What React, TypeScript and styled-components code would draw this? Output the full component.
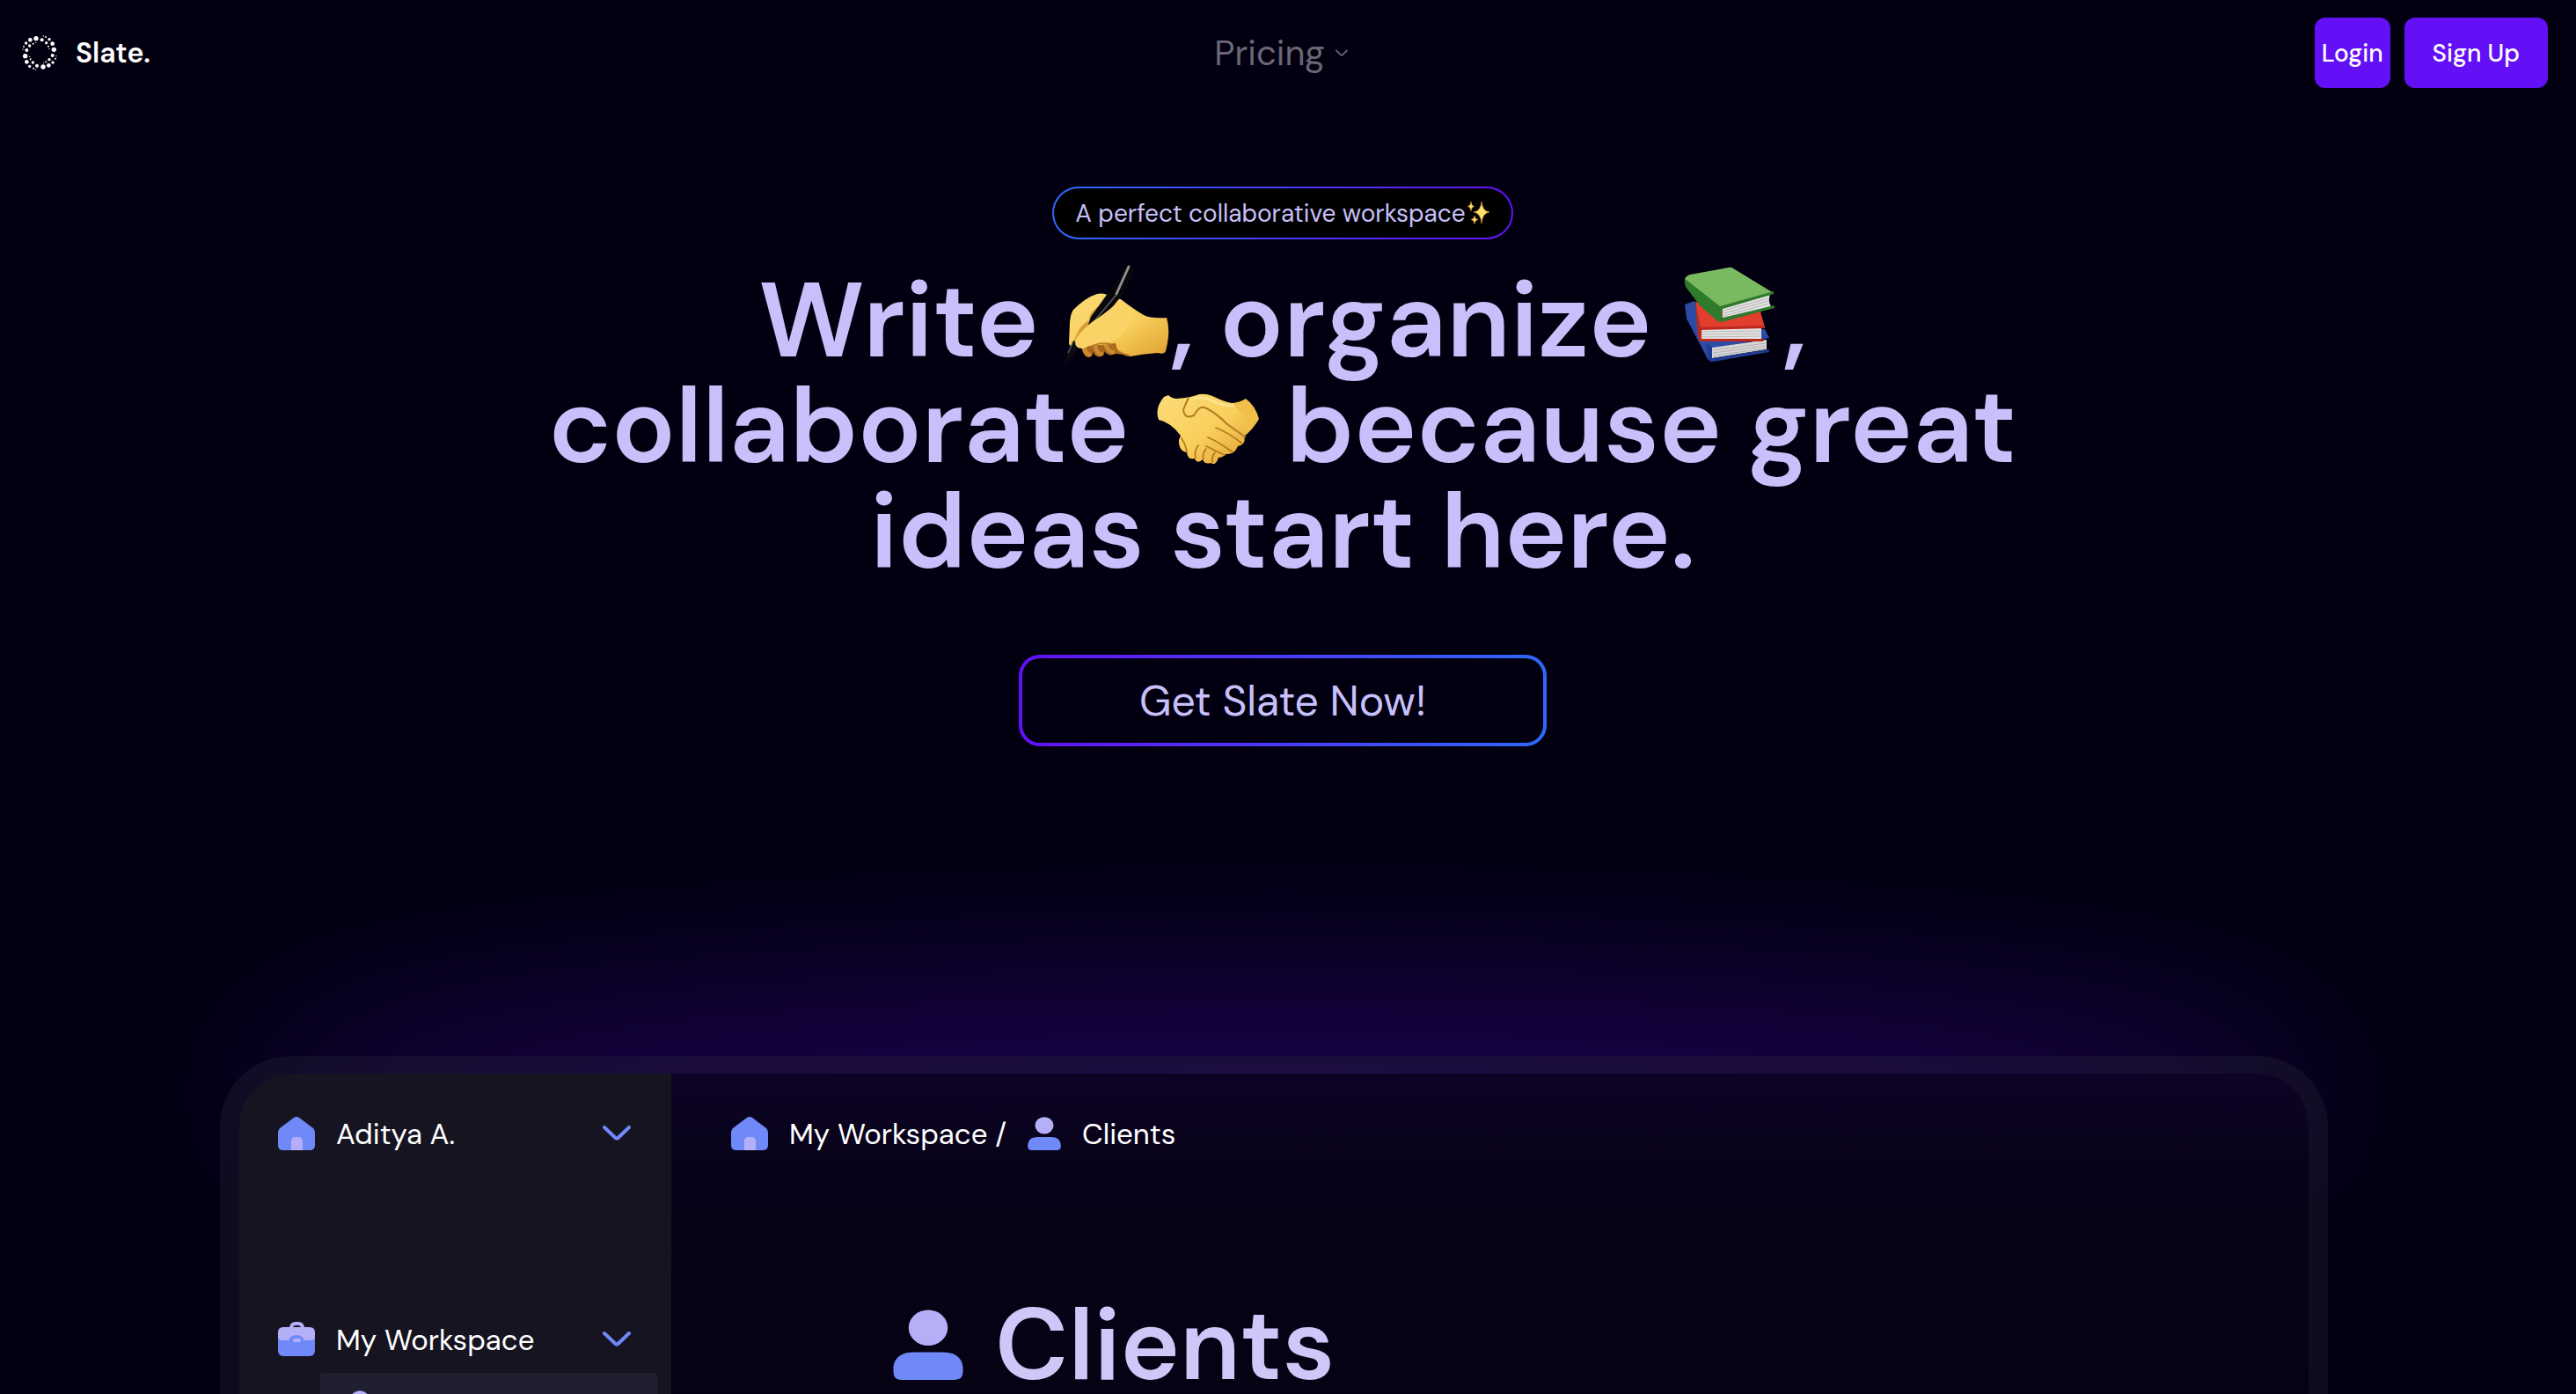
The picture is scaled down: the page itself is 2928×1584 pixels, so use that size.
import React from "react";
import styled, { createGlobalStyle } from "styled-components";

const GlobalStyle = createGlobalStyle`
  *, *::before, *::after { box-sizing: border-box; }
  body {
    margin: 0;
    background: #020010;
    color: #fff;
    font-family: "DM Sans", Inter, "Liberation Sans", sans-serif;
  }
  button, a { font-family: inherit; }
`;

const lilac = "#c8c0fa";
const violet = "#6410f6";
const azure = "#2e68fa";

const Page = styled.div`
  height: 100vh;
  overflow: hidden;
  display: flex;
  flex-direction: column;
  padding-right: 12px;
`;

const Header = styled.header`
  display: grid;
  grid-template-columns: 1fr auto 1fr;
  align-items: center;
  height: 120px;
  flex: none;
  padding: 0 20px;
`;

const Brand = styled.a`
  display: flex;
  align-items: center;
  gap: 20px;
  padding-left: 4px;
  color: #fff;
  font-size: 32px;
  font-weight: 600;
  text-decoration: none;
`;

const MenuButton = styled.button`
  display: flex;
  align-items: center;
  gap: 12px;
  padding: 0 4px 0 0;
  border: 0;
  background: none;
  color: #6b6775;
  font-size: 40px;
  line-height: 56px;
`;

const Actions = styled.div`
  display: flex;
  justify-content: flex-end;
  gap: 16px;
`;

const SolidButton = styled.button<{ $pad: number }>`
  height: 80px;
  padding: 0 ${(p) => p.$pad}px;
  border: 0;
  border-radius: 12px;
  background: ${violet};
  color: #fff;
  font-size: 28px;
  font-weight: 500;
`;

const Hero = styled.main`
  display: flex;
  flex-direction: column;
  align-items: center;
  flex: none;
  padding-top: 92px;
`;

const Badge = styled.p`
  display: flex;
  align-items: center;
  height: 60px;
  margin: 0;
  padding: 0 24px;
  border: 2px solid transparent;
  border-radius: 30px;
  background: linear-gradient(#000, #000) padding-box,
    linear-gradient(90deg, ${azure}, ${violet}) border-box;
  color: ${lilac};
  font-size: 28px;
`;

const Title = styled.h1`
  max-width: 1720px;
  margin: 32px 0 0;
  color: ${lilac};
  font-size: 120px;
  font-weight: 600;
  line-height: 120px;
  text-align: center;
`;

const Emoji = styled.svg`
  width: 120px;
  height: 120px;
  margin-top: -8px;
  vertical-align: -15px;
  overflow: visible;
`;

const CallToAction = styled.button`
  width: 600px;
  height: 104px;
  margin-top: 80px;
  border: 4px solid transparent;
  border-radius: 24px;
  background: linear-gradient(#020010, #020010) padding-box,
    linear-gradient(90deg, ${violet}, ${azure}) border-box;
  color: ${lilac};
  font-size: 48px;
`;

const Showcase = styled.section`
  position: relative;
  display: flex;
  flex: 1;
  min-height: 0;
  padding: 352px 270px 0 250px;
`;

const Glow = styled.div`
  position: absolute;
  top: 268px;
  left: 9%;
  right: 9%;
  height: 256px;
  border-radius: 50%;
  background: rgba(96, 8, 246, 0.28);
  filter: blur(100px);
`;

const Frame = styled.div`
  position: relative;
  flex: 1;
  display: flex;
  padding: 20px 22px 0;
  border-radius: 80px 80px 0 0;
  background: rgba(48, 44, 60, 0.28);
`;

const AppWindow = styled.div`
  flex: 1;
  display: flex;
  border-radius: 60px 60px 0 0;
  background: linear-gradient(#0d0326, #080318 30%, #060214);
  overflow: hidden;
`;

const Sidebar = styled.nav`
  flex: none;
  width: 491px;
  padding: 36px 16px 0 44px;
  background: #171422;
`;

const SideRow = styled.button<{ $gap: number }>`
  display: flex;
  align-items: center;
  gap: 24px;
  width: 100%;
  height: 64px;
  margin: 0 0 ${(p) => p.$gap}px;
  padding: 0 30px 0 0;
  border: 0;
  background: none;
  color: #fff;
  font-size: 33px;
  text-align: left;
`;

const RowLabel = styled.span`
  flex: 1;
`;

const NestedRow = styled.div`
  height: 80px;
  margin-left: 48px;
  padding: 20px 26px;
  border-radius: 4px;
  background: #201f30;
`;

const Workspace = styled.div`
  flex: 1;
  padding: 36px 68px 0;
`;

const Breadcrumb = styled.div`
  display: flex;
  align-items: center;
  gap: 24px;
  height: 64px;
  font-size: 33px;
`;

const DocTitle = styled.h2`
  display: flex;
  align-items: center;
  gap: 36px;
  margin: 158px 0 0 184px;
  color: #cdc8f8;
  font-size: 114px;
  font-weight: 600;
  line-height: 100px;
`;

const dots: [number, number, number][] = [
  [123, 131, 8], [143, 136, 6], [158, 146, 5], [165, 158, 3], [168, 167, 2],
  [168, 134, 5], [156, 126, 3], [148, 123, 2],
  [184, 169, 8], [179, 149, 7], [179, 189, 6], [168, 203, 5], [157, 211, 3], [149, 214, 2],
  [180, 213, 5], [189, 200, 3], [192, 191, 2],
  [147, 228, 8], [166, 223, 7], [126, 224, 6], [112, 213, 5], [104, 202, 3], [101, 193, 2],
  [101, 226, 5], [114, 233, 3], [122, 237, 2],
  [86, 191, 8], [91, 211, 7], [91, 171, 6], [101, 156, 5], [113, 149, 3], [122, 145, 2],
  [89, 147, 5], [81, 159, 3], [78, 168, 2],
  [103, 136, 7],
];

const Logo = () => (
  <svg width="42" height="42" viewBox="72 117 126 126" aria-hidden="true">
    {dots.map(([x, y, r], i) => (
      <circle key={i} cx={x} cy={y} r={r} fill="#fff" />
    ))}
  </svg>
);

const Chevron = ({ width, stroke, color }: { width: number; stroke: number; color: string }) => (
  <svg width={width} height={width / 2} viewBox="0 0 32 16" fill="none" overflow="visible" aria-hidden="true">
    <path
      d="M2 1 L14.5 13 Q16 14.200 17.5 13 L30 1"
      stroke={color}
      strokeWidth={stroke}
      strokeLinecap="round"
      strokeLinejoin="round"
    />
  </svg>
);

const HomeIcon = () => (
  <svg width="42" height="40" viewBox="0 0 42 40" aria-hidden="true">
    <path d="M18 2 Q21 0 24 2 L40 14 Q42 16 42 19 V33 Q42 39 36 39 H6 Q0 39 0 33 V19 Q0 16 2 14 Z" fill="#7089f8" />
    <path d="M15 39 V29 Q15 24 20 24 H23 Q28 24 28 29 V39 Z" fill="#b5aff7" />
  </svg>
);

const BriefcaseIcon = () => (
  <svg width="42" height="40" viewBox="0 0 42 40" aria-hidden="true">
    <rect y="10" width="42" height="29" rx="6" fill="#7089f8" />
    <path d="M6 6 H13 Q14 0 20 0 H23 Q29 0 30 6 H36 Q42 6 42 12 V17 Q42 21 37 21 H30 Q28 15 21 15 Q14 15 12 21 H6 Q0 21 0 17 V12 Q0 6 6 6 Z" fill="#b5aff7" />
    <path d="M17 6 Q18 4 20 4 H23 Q25 4 26 6 Z" fill="#181423" />
    <rect x="17" y="19" width="9" height="4" rx="2" fill="#b5aff7" />
  </svg>
);

const PersonIcon = ({ width }: { width: number }) => (
  <svg width={width} height={width} viewBox="0 0 80 81" aria-hidden="true">
    <ellipse cx="40" cy="21" rx="22.5" ry="20.5" fill="#b5aff7" />
    <path d="M0 72 V66 Q2 49 24 49 H56 Q78 49 80 66 V72 Q80 81 70 81 H10 Q0 81 0 72 Z" fill="#7089f8" />
  </svg>
);

const WritingHand = () => (
  <Emoji viewBox="0 0 120 120" role="img" aria-label="writing hand">
    <defs>
      <linearGradient id="skin" x1="0" y1="0" x2="1" y2="1">
        <stop offset="0" stopColor="#fbdc78" />
        <stop offset="0.55" stopColor="#f8cf5c" />
        <stop offset="1" stopColor="#dfa030" />
      </linearGradient>
    </defs>
    <path d="M19 90 Q20 105 27 106 Q33 106 32 99 Q35 107 42 105 Q46 104 45 99 Q50 106 58 102 L80 104 L100 90 L60 78 Z" fill="#a8661c" />
    <path d="M22 95 Q24 102 28 103 M35 94 Q37 102 41 102 M47 92 Q50 100 55 100" stroke="#c98a30" strokeWidth="5" fill="none" strokeLinecap="round" />
    <path d="M5 91 L6 66 Q7 56 10 52 Q24 38 37 34 Q46 32 55 39 L64 40 Q78 51 90 58 Q98 62 116 61 Q121 76 115 99 Q113 103 106 101 Q90 102 75 105 Q60 104 58 90 L20 94 Q9 97 5 91 Z" fill="url(#skin)" />
    <path d="M28 64 Q27 55 40 47 Q35 62 25 75 L14 91 Q8 93 12 84 Q19 67 28 64 Z" fill="#d99a35" />
    <path d="M0 115 L4 101 L10 87 L19 92 Z" fill="#0d0d0e" />
    <path d="M4 101 L10 88" stroke="#55555a" strokeWidth="1.5" />
    <path d="M70 4 Q75 -1 80 6 Q66 44 31 71 L24 78 L30 60 Z" fill="#08080a" />
    <path d="M73 3 L59 34" stroke="#8d8d92" strokeWidth="3" strokeLinecap="round" />
    <path d="M58 36 L32 67" stroke="#55555a" strokeWidth="1.8" strokeLinecap="round" />
    <path d="M60 44 Q44 58 31 66 Q14 80 12 88 Q12 97 22 96 Q30 91 40 89 Q55 89 62 83 L82 62 Z" fill="#fad366" />
    <path d="M29 94 Q42 88 52 91 Q60 101 74 104" stroke="#b87524" strokeWidth="1.5" fill="none" />
  </Emoji>
);

const Books = () => (
  <Emoji viewBox="2 0 120 120" role="img" aria-label="books">
    <path d="M10 46 L21 42 L34 78 L101 74 L106 84 L41 96 L42 109 Q37 112 34 104 L12 62 Z" fill="#2c4ba6" />
    <path d="M41 95 L103 86 L103 97 L41 107 Z" fill="#d6d6d8" />
    <path d="M42 98 L102 90 M42 101 L102 93 M42 104 L102 96" stroke="#aaa" strokeWidth="0.8" />
    <path d="M34 90 L41 94 L41 107 L105 97 L106 100 L42 111 Q38 112 37 107 Z" fill="#203b91" />
    <path d="M22 43 L52 50 L96 54 L101 72 L27 74 Z" fill="#e23e2d" />
    <path d="M28 73 L97 72 L97 86 L28 87 Z" fill="#e4e4e4" />
    <path d="M29 77 L96 76 M29 80 L96 79 M29 83 L96 82" stroke="#aaa" strokeWidth="0.8" />
    <path d="M22 43 L28 72 L101 70 L101 73 L29 75 L29 85 L99 85 L99 88 L29 88 Q26 88 25 83 Z" fill="#bd281d" />
    <path d="M10 17 Q11 14 16 12 L60 4 Q63 3 65 5 L111 33 L51 50 Z" fill="#79b95f" />
    <path d="M53 49 L107 35 Q104 41 108 48 L53 63 Z" fill="#e2e2e2" />
    <path d="M54 53 L105 39 M54 56 L105 42 M54 59 L106 45" stroke="#aaa" strokeWidth="0.8" />
    <path d="M10 17 L50 48 L111 31 L111 34 L53 51 Q51 55 53 61 L112 47 L112 50 L52 66 Q49 66 46 64 L27 47 L11 26 Q9 21 10 17 Z" fill="#2f7a2c" />
  </Emoji>
);

const Handshake = () => (
  <Emoji viewBox="0 -10 120 120" role="img" aria-label="handshake">
    <path d="M88 28 Q97 27 103 23 Q114 31 118 46 Q112 57 101 66 L80 60 L60 30 Z" fill="#f0c04a" />
    <path d="M15 19 Q19 23 25 23 Q40 22 50 18 Q58 17 65 20 Q82 28 88 28 L106 50 Q107 58 101 66 Q104 75 94 77 Q90 87 80 86 Q77 90 72 90 Q69 100 63 96 Q56 98 54 92 Q48 98 45 91 Q37 93 36 84 Q26 82 27 70 L29 65 Q18 50 4 47 Q-1 34 10 21 Z" fill="url(#skin)" />
    <path d="M38 22 Q34 30 32 36 Q34 47 44 42 Q50 31 56 33 Q68 38 82 52 L103 67" stroke="#b67b22" strokeWidth="2" fill="none" />
    <path d="M69 56 Q84 62 99 74 M60 67 Q72 72 88 84 M58 77 Q66 81 79 87 M36 84 Q35 75 30 68 M46 90 Q44 83 49 76 M55 92 Q53 86 58 80 M65 95 Q64 89 68 84" stroke="#b67b22" strokeWidth="1.8" fill="none" strokeLinecap="round" />
    <path d="M42 24 Q50 20 62 24 Q78 32 89 31" stroke="#fce38d" strokeWidth="3" fill="none" strokeLinecap="round" />
  </Emoji>
);

const Sparkles = () => (
  <svg width="28" height="28" viewBox="0 0 28 28" role="img" aria-label="sparkles">
    <path
      d="M18 1 Q19 12 27 13 Q19 14 18 26 Q17 14 9 13 Q17 12 18 1Z M6 1 Q6.500 6 10 6.500 Q6.500 7 6 12 Q5.500 7 2 6.500 Q5.500 6 6 1Z M10 17 Q10.500 21 14 21.500 Q10.500 22 10 26.500 Q9.500 22 6 21.500 Q9.500 21 10 17Z"
      fill="#fbe06a"
      stroke="#d98a2b"
      strokeWidth="0.6"
    />
  </svg>
);

export default function App() {
  return (
    <>
      <GlobalStyle />
      <Page>
        <Header>
          <Brand href="#">
            <Logo />
            Slate.
          </Brand>
          <MenuButton type="button">
            Pricing
            <Chevron width={14} stroke={4} color="#6b6775" />
          </MenuButton>
          <Actions>
            <SolidButton type="button" $pad={8}>Login</SolidButton>
            <SolidButton type="button" $pad={32}>Sign Up</SolidButton>
          </Actions>
        </Header>
        <Hero>
          <Badge>
            A perfect collaborative workspace
            <Sparkles />
          </Badge>
          <Title>
            Write <WritingHand />, organize <Books />, collaborate <Handshake /> because great ideas start here.
          </Title>
          <CallToAction type="button">Get Slate Now!</CallToAction>
        </Hero>
        <Showcase>
          <Glow />
          <Frame>
            <AppWindow>
              <Sidebar>
                <SideRow type="button" $gap={170}>
                  <HomeIcon />
                  <RowLabel>Aditya A.</RowLabel>
                  <Chevron width={32} stroke={4} color="#7089f8" />
                </SideRow>
                <SideRow type="button" $gap={6}>
                  <BriefcaseIcon />
                  <RowLabel>My Workspace</RowLabel>
                  <Chevron width={32} stroke={4} color="#7089f8" />
                </SideRow>
                <NestedRow>
                  <PersonIcon width={38} />
                </NestedRow>
              </Sidebar>
              <Workspace>
                <Breadcrumb>
                  <HomeIcon />
                  <span>My Workspace /</span>
                  <PersonIcon width={38} />
                  <span>Clients</span>
                </Breadcrumb>
                <DocTitle>
                  <PersonIcon width={80} />
                  Clients
                </DocTitle>
              </Workspace>
            </AppWindow>
          </Frame>
        </Showcase>
      </Page>
    </>
  );
}
